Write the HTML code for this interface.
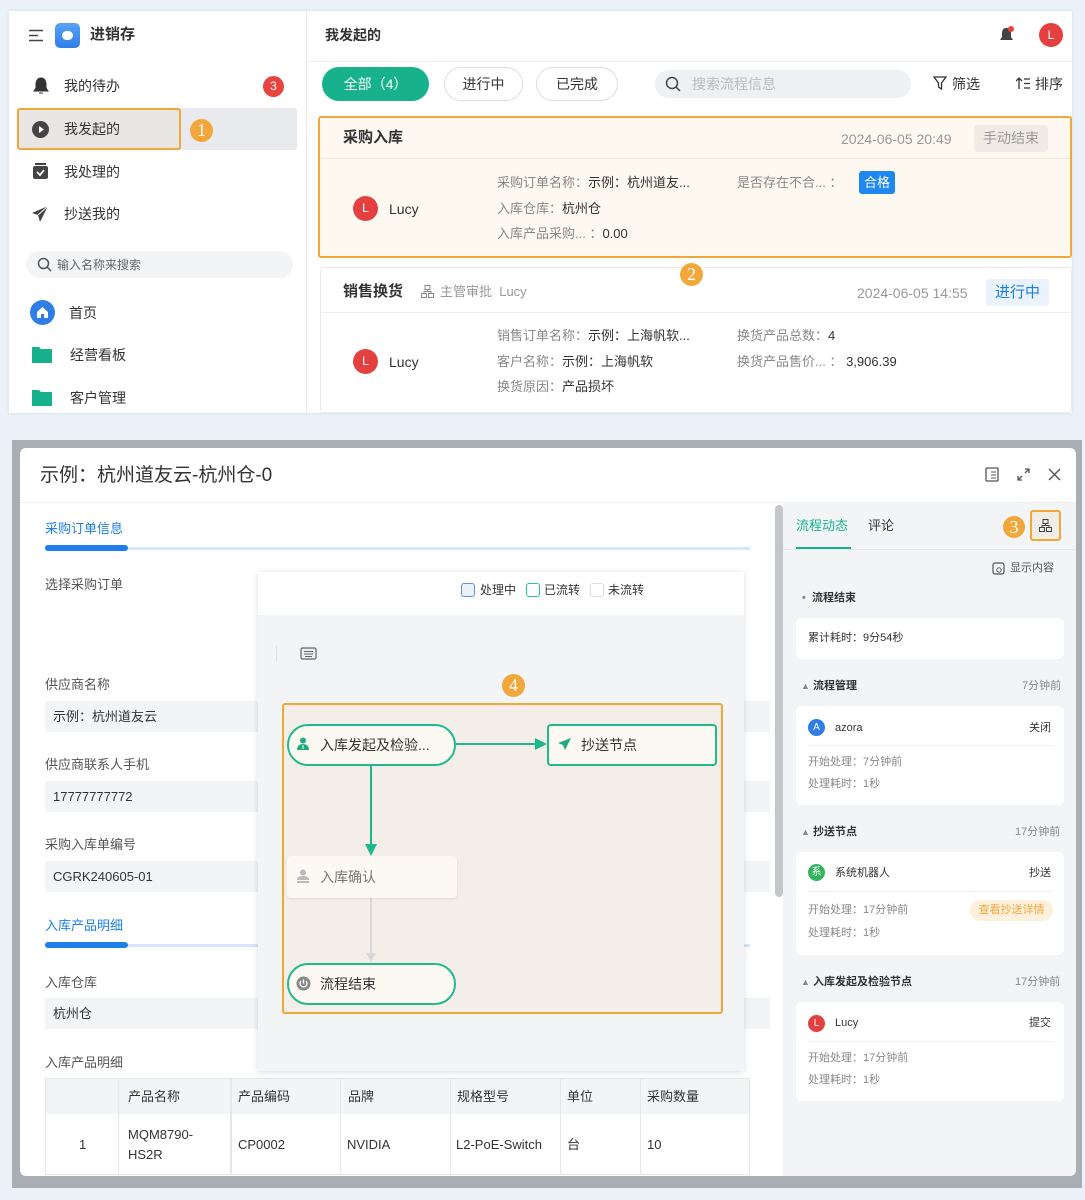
<!DOCTYPE html>
<html><head><meta charset="utf-8"><style>
*{box-sizing:border-box;margin:0;padding:0}
body{width:1085px;height:1200px;background:#eaf1f8;font-family:"Liberation Sans","Noto Sans CJK SC",sans-serif;color:#333;position:relative;overflow:hidden;font-size:14px}
.a{position:absolute;white-space:nowrap}
.t{line-height:20px}
.badge{position:absolute;border-radius:50%;background:#f2a73b;color:#fff;text-align:center;font-family:"Liberation Serif",serif;font-size:18px;z-index:5}
.g{color:#888}
.inp{position:absolute;left:45px;width:725px;height:31px;background:#f3f4f6;padding-left:8px;line-height:31px;font-size:13px;color:#333}
.lbl{position:absolute;left:45px;font-size:13px;color:#555;line-height:20px}
.card{position:absolute;left:796px;width:268px;background:#fff;border-radius:6px}
.rp{font-size:11px}
</style></head><body>

<!-- TOP SCREEN -->
<div class="a" style="left:9px;top:11px;width:1063px;height:402px;background:#fff;box-shadow:0 0 3px #d6dde5"></div>
<div class="a" style="left:306px;top:11px;width:1px;height:402px;background:#ececec"></div>
<!-- sidebar -->
<svg class="a" style="left:29px;top:29px" width="15" height="13"><path d="M0 1.5H14M0 6.5H9M0 11.5H14" stroke="#444" stroke-width="1.6"/></svg>
<div class="a" style="left:55px;top:23px;width:25px;height:25px;border-radius:5px;background:linear-gradient(#5aa2f5,#2f7de8)"></div>
<div class="a" style="left:62px;top:31px;width:11px;height:9px;border-radius:5px;background:#fff"></div>
<div class="a t" style="left:90px;top:25px;font-weight:bold;font-size:15px">进销存</div>

<svg class="a" style="left:32px;top:77px" width="18" height="18"><path d="M9 1c-3.5 0-5 3-5 6v4l-2 3h14l-2-3V7c0-3-1.5-6-5-6z M7 16h4" fill="#333" stroke="#333"/></svg>
<div class="a t" style="left:64px;top:76px">我的待办</div>
<div class="a" style="left:263px;top:76px;width:21px;height:21px;border-radius:50%;background:#e8443f;color:#fff;font-size:12px;text-align:center;line-height:21px">3</div>

<div class="a" style="left:17px;top:108px;width:280px;height:42px;background:#e9eaed;border-radius:3px"></div>
<div class="a" style="left:17px;top:108px;width:164px;height:42px;border:2px solid #f2a73b;border-radius:3px;background:#e8e7e4"></div>
<div class="a" style="left:32px;top:121px;width:17px;height:17px;border-radius:50%;background:#444"></div>
<svg class="a" style="left:32px;top:121px" width="17" height="17"><path d="M7 5l5 3.5-5 3.5z" fill="#fff"/></svg>
<div class="a t" style="left:64px;top:119px">我发起的</div>
<div class="badge" style="left:190px;top:119px;width:23px;height:23px;line-height:23px">1</div>

<svg class="a" style="left:32px;top:163px" width="17" height="17"><rect x="1" y="3" width="15" height="13" rx="2" fill="#444"/><rect x="3" y="0" width="11" height="2" fill="#444"/><path d="M5 9l3 3 4-5" stroke="#fff" stroke-width="1.8" fill="none"/></svg>
<div class="a t" style="left:64px;top:162px">我处理的</div>
<svg class="a" style="left:31px;top:205px" width="18" height="18"><path d="M17 1L1 8l6 2 2 7z" fill="#444"/><path d="M17 1L7 10" stroke="#fff" stroke-width="1"/></svg>
<div class="a t" style="left:64px;top:204px">抄送我的</div>

<div class="a" style="left:26px;top:251px;width:267px;height:27px;border-radius:14px;background:#f3f4f6"></div>
<svg class="a" style="left:37px;top:257px" width="15" height="15"><circle cx="6.5" cy="6.5" r="5" stroke="#555" stroke-width="1.5" fill="none"/><path d="M10 10l4 4" stroke="#555" stroke-width="1.5"/></svg>
<div class="a t" style="left:57px;top:255px;font-size:12px;color:#666">输入名称来搜索</div>

<div class="a" style="left:30px;top:300px;width:25px;height:25px;border-radius:50%;background:#2f7ee8"></div>
<svg class="a" style="left:30px;top:300px" width="25" height="25"><path d="M7 12l5.5-5 5.5 5v6h-4v-4h-3v4H7z" fill="#fff"/></svg>
<div class="a t" style="left:69px;top:303px">首页</div>
<svg class="a" style="left:32px;top:346px" width="20" height="17"><path d="M0 1h7l2 2h11v14H0z" fill="#17b28b"/></svg>
<div class="a t" style="left:70px;top:345px">经营看板</div>
<svg class="a" style="left:32px;top:389px" width="20" height="17"><path d="M0 1h7l2 2h11v14H0z" fill="#17b28b"/></svg>
<div class="a t" style="left:70px;top:388px">客户管理</div>

<!-- main header -->
<div class="a t" style="left:325px;top:25px;font-weight:bold">我发起的</div>
<div class="a" style="left:307px;top:61px;width:765px;height:1px;background:#eee"></div>
<svg class="a" style="left:998px;top:25px" width="18" height="20"><path d="M8 3c-3 0-4 3-4 5v4l-2 3h13l-2-3V8c0-2-1-5-4-5z" fill="#444"/><circle cx="13" cy="4" r="3" fill="#e8443f"/></svg>
<div class="a" style="left:1039px;top:23px;width:24px;height:24px;border-radius:50%;background:#e54040;color:#fff;font-size:12px;text-align:center;line-height:24px">L</div>

<div class="a" style="left:322px;top:67px;width:107px;height:34px;border-radius:17px;background:#17b28b;color:#fff;text-align:center;line-height:34px">全部（4）</div>
<div class="a" style="left:444px;top:67px;width:79px;height:34px;border-radius:17px;border:1px solid #ddd;text-align:center;line-height:32px">进行中</div>
<div class="a" style="left:536px;top:67px;width:82px;height:34px;border-radius:17px;border:1px solid #ddd;text-align:center;line-height:32px">已完成</div>
<div class="a" style="left:655px;top:70px;width:256px;height:28px;border-radius:14px;background:#eef0f3"></div>
<svg class="a" style="left:665px;top:76px" width="16" height="16"><circle cx="7" cy="7" r="5.5" stroke="#444" stroke-width="1.5" fill="none"/><path d="M11 11l4 4" stroke="#444" stroke-width="1.5"/></svg>
<div class="a t" style="left:692px;top:74px;color:#bbb">搜索流程信息</div>
<svg class="a" style="left:933px;top:76px" width="14" height="15"><path d="M1 1h12l-4.5 6v6l-3-2V7z" stroke="#333" stroke-width="1.3" fill="none"/></svg>
<div class="a t" style="left:952px;top:74px">筛选</div>
<svg class="a" style="left:1016px;top:77px" width="14" height="13"><path d="M3 12V1M0 4l3-3 3 3M8 2h6M8 6.5h6M8 11h6" stroke="#333" stroke-width="1.3" fill="none"/></svg>
<div class="a t" style="left:1035px;top:74px">排序</div>

<!-- card1 -->
<div class="a" style="left:318px;top:116px;width:754px;height:142px;border:2px solid #f2a73b;border-radius:3px;background:#fdf8f0"></div>
<div class="a" style="left:320px;top:158px;width:750px;height:1px;background:#efe6d8"></div>
<div class="a t" style="left:343px;top:128px;font-weight:bold;font-size:15px">采购入库</div>
<div class="a t" style="left:841px;top:129px;color:#999">2024-06-05 20:49</div>
<div class="a" style="left:974px;top:125px;width:74px;height:27px;background:#f0ebe4;border-radius:3px;color:#999;text-align:center;line-height:27px">手动结束</div>
<div class="a" style="left:353px;top:196px;width:25px;height:25px;border-radius:50%;background:#e54040;color:#fff;font-size:12px;text-align:center;line-height:25px">L</div>
<div class="a t" style="left:389px;top:199px">Lucy</div>
<div class="a t" style="left:497px;top:173px;font-size:13px"><span class="g">采购订单名称：</span>示例：杭州道友...</div>
<div class="a t" style="left:497px;top:199px;font-size:13px"><span class="g">入库仓库：</span>杭州仓</div>
<div class="a t" style="left:497px;top:224px;font-size:13px"><span class="g">入库产品采购... ：</span>0.00</div>
<div class="a t" style="left:737px;top:173px;font-size:13px"><span class="g">是否存在不合... ：</span></div>
<div class="a" style="left:859px;top:171px;width:36px;height:23px;background:#1e87f0;border-radius:3px;color:#fff;font-size:13px;text-align:center;line-height:23px">合格</div>

<!-- card2 -->
<div class="a" style="left:320px;top:267px;width:752px;height:146px;border:1px solid #eaeaea;border-radius:3px;background:#fff"></div>
<div class="a" style="left:321px;top:312px;width:750px;height:1px;background:#eee"></div>
<div class="a t" style="left:343px;top:282px;font-weight:bold;font-size:15px">销售换货</div>
<svg class="a" style="left:421px;top:285px" width="13" height="13"><rect x="4" y="0.5" width="5" height="4" stroke="#888" fill="none"/><rect x="0.5" y="8.5" width="5" height="4" stroke="#888" fill="none"/><rect x="7.5" y="8.5" width="5" height="4" stroke="#888" fill="none"/><path d="M6.5 4.5v2M3 8.5v-2h7v2" stroke="#888" fill="none"/></svg>
<div class="a t" style="left:440px;top:282px;font-size:13px;color:#999">主管审批 &nbsp;Lucy</div>
<div class="a t" style="left:857px;top:283px;color:#999">2024-06-05 14:55</div>
<div class="a" style="left:986px;top:279px;width:63px;height:27px;background:#e9f2fd;border-radius:3px;color:#1e7fe8;text-align:center;line-height:27px;font-size:15px">进行中</div>
<div class="a" style="left:353px;top:349px;width:25px;height:25px;border-radius:50%;background:#e54040;color:#fff;font-size:12px;text-align:center;line-height:25px">L</div>
<div class="a t" style="left:389px;top:352px">Lucy</div>
<div class="a t" style="left:497px;top:326px;font-size:13px"><span class="g">销售订单名称：</span>示例：上海帆软...</div>
<div class="a t" style="left:497px;top:352px;font-size:13px"><span class="g">客户名称：</span>示例：上海帆软</div>
<div class="a t" style="left:497px;top:377px;font-size:13px"><span class="g">换货原因：</span>产品损坏</div>
<div class="a t" style="left:737px;top:326px;font-size:13px"><span class="g">换货产品总数：</span>4</div>
<div class="a t" style="left:737px;top:352px;font-size:13px"><span class="g">换货产品售价... ：</span>&nbsp;3,906.39</div>
<div class="badge" style="left:680px;top:263px;width:23px;height:23px;line-height:23px">2</div>

<!-- BOTTOM -->
<div class="a" style="left:12px;top:440px;width:1070px;height:748px;background:#a9adb4"></div>
<div class="a" style="left:20px;top:448px;width:1056px;height:728px;background:#fff;border-radius:6px;overflow:hidden">
  <div class="a" style="left:0;top:54px;width:1056px;height:1px;background:#eee"></div>
  <div class="a" style="left:763px;top:55px;width:293px;height:673px;background:#f3f4f6"></div>
  <div class="a" style="left:755px;top:57px;width:8px;height:392px;border-radius:4px;background:#c4c6ca"></div>
</div>
<div class="a t" style="left:40px;top:464px;font-size:19px;line-height:24px">示例：杭州道友云-杭州仓-0</div>
<svg class="a" style="left:985px;top:467px" width="14" height="15"><rect x="1" y="1" width="12" height="13" rx="1" stroke="#555" fill="none" stroke-width="1.3"/><path d="M6 5h5M6 8h5M6 11h5" stroke="#555"/></svg>
<svg class="a" style="left:1017px;top:468px" width="13" height="13"><path d="M8 1h4v4M12 1L8 5M5 12H1V8M1 12l4-4" stroke="#555" stroke-width="1.3" fill="none"/></svg>
<svg class="a" style="left:1048px;top:468px" width="13" height="13"><path d="M1 1l11 11M12 1L1 12" stroke="#555" stroke-width="1.4"/></svg>

<div class="a t" style="left:45px;top:519px;font-size:13px;color:#1e7fe8">采购订单信息</div>
<div class="a" style="left:45px;top:547px;width:705px;height:3px;background:#d6e6fb"></div>
<div class="a" style="left:45px;top:545px;width:83px;height:6px;border-radius:3px;background:#1e7fe8"></div>
<div class="lbl" style="top:575px">选择采购订单</div>
<div class="lbl" style="top:675px">供应商名称</div>
<div class="inp" style="top:701px">示例：杭州道友云</div>
<div class="lbl" style="top:755px">供应商联系人手机</div>
<div class="inp" style="top:781px">17777777772</div>
<div class="lbl" style="top:835px">采购入库单编号</div>
<div class="inp" style="top:861px">CGRK240605-01</div>
<div class="a t" style="left:45px;top:916px;font-size:13px;color:#1e7fe8">入库产品明细</div>
<div class="a" style="left:45px;top:944px;width:705px;height:3px;background:#d6e6fb"></div>
<div class="a" style="left:45px;top:942px;width:83px;height:6px;border-radius:3px;background:#1e7fe8"></div>
<div class="lbl" style="top:973px">入库仓库</div>
<div class="inp" style="top:998px">杭州仓</div>
<div class="lbl" style="top:1053px">入库产品明细</div>
<!-- table -->
<div class="a" style="left:45px;top:1078px;width:705px;height:97px;border:1px solid #e6e6e6"></div>
<div class="a" style="left:46px;top:1079px;width:703px;height:35px;background:#f3f4f6"></div>
<div class="a" style="left:118px;top:1079px;width:1px;height:95px;background:#e6e6e6"></div>
<div class="a" style="left:230px;top:1079px;width:2px;height:95px;background:#e6e6e6"></div>
<div class="a" style="left:340px;top:1079px;width:1px;height:95px;background:#e6e6e6"></div>
<div class="a" style="left:450px;top:1079px;width:1px;height:95px;background:#e6e6e6"></div>
<div class="a" style="left:560px;top:1079px;width:1px;height:95px;background:#e6e6e6"></div>
<div class="a" style="left:640px;top:1079px;width:1px;height:95px;background:#e6e6e6"></div>
<div class="a t" style="left:128px;top:1087px;font-size:13px">产品名称</div>
<div class="a t" style="left:238px;top:1087px;font-size:13px">产品编码</div>
<div class="a t" style="left:348px;top:1087px;font-size:13px">品牌</div>
<div class="a t" style="left:457px;top:1087px;font-size:13px">规格型号</div>
<div class="a t" style="left:567px;top:1087px;font-size:13px">单位</div>
<div class="a t" style="left:647px;top:1087px;font-size:13px">采购数量</div>
<div class="a t" style="left:79px;top:1135px;font-size:13px">1</div>
<div class="a" style="left:128px;top:1125px;font-size:13px;line-height:20px">MQM8790-<br>HS2R</div>
<div class="a t" style="left:238px;top:1135px;font-size:13px">CP0002</div>
<div class="a t" style="left:347px;top:1135px;font-size:13px">NVIDIA</div>
<div class="a t" style="left:456px;top:1135px;font-size:13px">L2-PoE-Switch</div>
<div class="a t" style="left:567px;top:1135px;font-size:13px">台</div>
<div class="a t" style="left:647px;top:1135px;font-size:13px">10</div>

<!-- flow popover -->
<div class="a" style="left:258px;top:572px;width:486px;height:499px;background:#f3f4f6;box-shadow:0 1px 6px rgba(0,0,0,.15)"></div>
<div class="a" style="left:258px;top:572px;width:486px;height:43px;background:#fff"></div>
<div class="a" style="left:461px;top:583px;width:14px;height:14px;border:1.5px solid #5b8ff0;border-radius:3px;background:#eaf1fd"></div>
<div class="a t" style="left:480px;top:580px;font-size:12px">处理中</div>
<div class="a" style="left:526px;top:583px;width:14px;height:14px;border:1.5px solid #2fc29a;border-radius:3px"></div>
<div class="a t" style="left:544px;top:580px;font-size:12px">已流转</div>
<div class="a" style="left:590px;top:583px;width:14px;height:14px;border:1px solid #ddd;border-radius:3px"></div>
<div class="a t" style="left:608px;top:580px;font-size:12px">未流转</div>
<div class="a" style="left:276px;top:645px;width:1px;height:16px;background:#e2e2e2"></div>
<svg class="a" style="left:300px;top:647px" width="17" height="13"><rect x="1" y="1" width="15" height="11" rx="1.5" stroke="#666" fill="#eee" stroke-width="1.2"/><path d="M4 4.5h9M4 7h9M5 9.5h7" stroke="#666"/></svg>
<div class="badge" style="left:502px;top:674px;width:23px;height:23px;line-height:23px">4</div>
<div class="a" style="left:282px;top:703px;width:441px;height:311px;border:2px solid #f2a73b;border-radius:3px;background:#f3efe8"></div>
<svg class="a" style="left:282px;top:703px" width="441" height="311">
<path d="M174 41H258" stroke="#1fb88e" stroke-width="2"/><path d="M253 35l12 6-12 6z" fill="#1fb88e"/>
<path d="M89 62V145" stroke="#1fb88e" stroke-width="2"/><path d="M83 141l6 12 6-12z" fill="#1fb88e"/>
<path d="M89 195V253" stroke="#d3d3d3" stroke-width="1.5"/><path d="M84 250l5 9 5-9z" fill="#d8d8d8"/>
</svg>
<div class="a" style="left:287px;top:724px;width:169px;height:42px;border:2px solid #22b88f;border-radius:21px;background:#fcf9f3"></div>
<svg class="a" style="left:296px;top:737px" width="14" height="14"><circle cx="7" cy="3.5" r="3" fill="#1fa97f"/><path d="M1 13c0-4 2.5-6 6-6s6 2 6 6z" fill="#1fa97f"/><path d="M7 8v4" stroke="#fff"/></svg>
<div class="a t" style="left:320px;top:735px">入库发起及检验...</div>
<div class="a" style="left:547px;top:724px;width:170px;height:42px;border:2px solid #22b88f;border-radius:4px;background:#fcf9f3"></div>
<svg class="a" style="left:557px;top:737px" width="15" height="14"><path d="M14 1L1 6l5 2 2 5z" fill="#1fa97f"/></svg>
<div class="a t" style="left:581px;top:735px">抄送节点</div>
<div class="a" style="left:287px;top:856px;width:170px;height:42px;border-radius:4px;background:#fcf9f4;box-shadow:0 1px 2px rgba(0,0,0,.08)"></div>
<svg class="a" style="left:296px;top:869px" width="14" height="14"><circle cx="7" cy="3.5" r="3" fill="#bbb"/><path d="M1 11c0-3 2.5-4 6-4s6 1 6 4z" fill="#bbb"/><rect x="1" y="12" width="12" height="2" fill="#bbb"/></svg>
<div class="a t" style="left:320px;top:867px;color:#777">入库确认</div>
<div class="a" style="left:287px;top:963px;width:169px;height:42px;border:2px solid #22b88f;border-radius:21px;background:#fcf9f3"></div>
<svg class="a" style="left:296px;top:976px" width="15" height="15"><circle cx="7.5" cy="7.5" r="7" fill="#888"/><path d="M5 5a3.5 3.5 0 1 0 5 0M7.5 3.5v4" stroke="#fff" stroke-width="1.3" fill="none"/></svg>
<div class="a t" style="left:320px;top:974px">流程结束</div>

<!-- right panel -->
<div class="a t" style="left:796px;top:516px;font-size:13px;color:#17b28b">流程动态</div>
<div class="a t" style="left:868px;top:516px;font-size:13px">评论</div>
<div class="a" style="left:796px;top:547px;width:55px;height:2px;background:#17b28b"></div>
<div class="a" style="left:783px;top:549px;width:293px;height:1px;background:#e6e6e6"></div>
<div class="badge" style="left:1003px;top:516px;width:22px;height:22px;line-height:22px">3</div>
<div class="a" style="left:1030px;top:510px;width:31px;height:31px;border:2px solid #f2a73b;border-radius:3px;background:#f0ece6"></div>
<svg class="a" style="left:1039px;top:519px" width="13" height="13"><rect x="4" y="0.5" width="5" height="4" stroke="#444" fill="none"/><rect x="0.5" y="8.5" width="5" height="4" stroke="#444" fill="none"/><rect x="7.5" y="8.5" width="5" height="4" stroke="#444" fill="none"/><path d="M6.5 4.5v2M3 8.5v-2h7v2" stroke="#444" fill="none"/></svg>
<svg class="a" style="left:992px;top:562px" width="13" height="13"><rect x="1" y="1" width="11" height="11" rx="2" stroke="#555" fill="none" stroke-width="1.2"/><circle cx="7" cy="8" r="2.2" stroke="#555" fill="#fff"/></svg>
<div class="a t rp" style="left:1010px;top:558px;color:#555">显示内容</div>
<div class="a t rp" style="left:802px;top:588px;font-weight:bold"><span style="color:#888">•</span>&nbsp; 流程结束</div>
<div class="card" style="top:618px;height:41px"></div>
<div class="a t rp" style="left:808px;top:628px">累计耗时：9分54秒</div>

<div class="a t rp" style="left:801px;top:676px;font-weight:bold"><span style="color:#888;font-size:9px">▲</span> 流程管理</div>
<div class="a t rp g" style="left:1022px;top:676px">7分钟前</div>
<div class="card" style="top:706px;height:99px"></div>
<div class="a" style="left:808px;top:719px;width:17px;height:17px;border-radius:50%;background:#2f7ee8;color:#fff;font-size:10px;text-align:center;line-height:17px">A</div>
<div class="a t rp" style="left:835px;top:718px">azora</div>
<div class="a t rp" style="left:1029px;top:718px">关闭</div>
<div class="a" style="left:808px;top:745px;width:245px;height:1px;background:#eee"></div>
<div class="a t rp g" style="left:808px;top:752px">开始处理：7分钟前</div>
<div class="a t rp g" style="left:808px;top:774px">处理耗时：1秒</div>

<div class="a t rp" style="left:801px;top:822px;font-weight:bold"><span style="color:#888;font-size:9px">▲</span> 抄送节点</div>
<div class="a t rp g" style="left:1015px;top:822px">17分钟前</div>
<div class="card" style="top:852px;height:103px"></div>
<div class="a" style="left:808px;top:864px;width:17px;height:17px;border-radius:50%;background:#34b45f;color:#fff;font-size:10px;text-align:center;line-height:17px">系</div>
<div class="a t rp" style="left:835px;top:863px">系统机器人</div>
<div class="a t rp" style="left:1029px;top:863px">抄送</div>
<div class="a" style="left:808px;top:891px;width:245px;height:1px;background:#eee"></div>
<div class="a t rp g" style="left:808px;top:900px">开始处理：17分钟前</div>
<div class="a" style="left:970px;top:900px;width:83px;height:21px;border-radius:10px;background:#fdf1de;color:#f2a73b;font-size:11px;text-align:center;line-height:21px">查看抄送详情</div>
<div class="a t rp g" style="left:808px;top:923px">处理耗时：1秒</div>

<div class="a t rp" style="left:801px;top:972px;font-weight:bold"><span style="color:#888;font-size:9px">▲</span> 入库发起及检验节点</div>
<div class="a t rp g" style="left:1015px;top:972px">17分钟前</div>
<div class="card" style="top:1002px;height:99px"></div>
<div class="a" style="left:808px;top:1015px;width:17px;height:17px;border-radius:50%;background:#e54040;color:#fff;font-size:10px;text-align:center;line-height:17px">L</div>
<div class="a t rp" style="left:835px;top:1013px">Lucy</div>
<div class="a t rp" style="left:1029px;top:1013px">提交</div>
<div class="a" style="left:808px;top:1041px;width:245px;height:1px;background:#eee"></div>
<div class="a t rp g" style="left:808px;top:1048px">开始处理：17分钟前</div>
<div class="a t rp g" style="left:808px;top:1070px">处理耗时：1秒</div>
</body></html>
